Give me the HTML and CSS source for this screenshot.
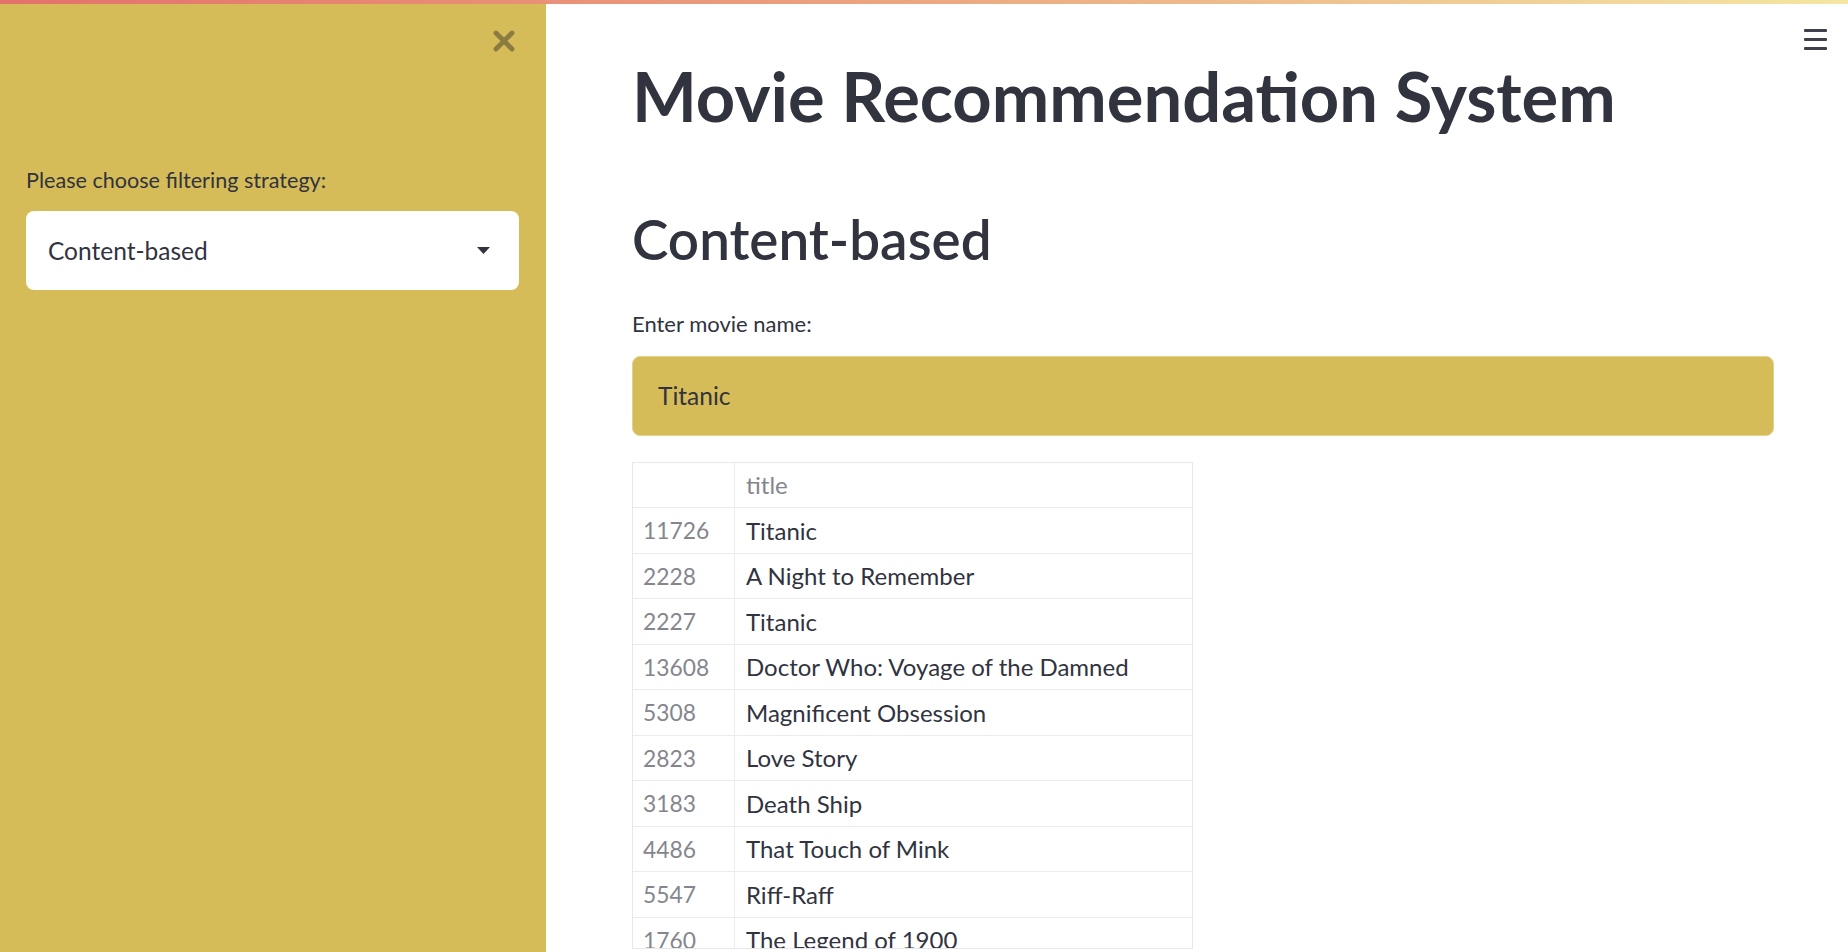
FILE: index.html
```html
<!DOCTYPE html>
<html lang="en">
<head>
<meta charset="utf-8">
<title>Movie Recommendation System</title>
<link rel="stylesheet" href="styles.css">
</head>
<body>
<div class="app">
  <div class="decoration"></div>
  <div class="layout">
    <aside class="sidebar">
      <div class="sidebar-top">
        <svg class="close-icon" viewBox="0 0 22 22" aria-label="Close sidebar">
          <path d="M3 3 L19 19 M19 3 L3 19" stroke="#8a7c41" stroke-width="4.8" stroke-linecap="round" fill="none"/>
        </svg>
      </div>
      <label class="widget-label side-label">Please choose filtering strategy:</label>
      <div class="select">
        <span>Content-based</span>
        <svg class="caret" viewBox="0 0 13 7"><polygon points="0,0 13,0 6.5,7" fill="#31333f"/></svg>
      </div>
    </aside>
    <main class="main">
      <div class="menu-btn" aria-label="Menu">
        <span class="bar"></span><span class="bar"></span><span class="bar"></span>
      </div>
      <div class="block">
        <h1 class="title">Movie Recommendation System</h1>
        <h2 class="subtitle">Content-based</h2>
        <label class="widget-label main-label">Enter movie name:</label>
        <div class="text-input">Titanic</div>
        <div class="dataframe">
          <div class="row head"><div class="cell idx"></div><div class="cell col">title</div></div>
          <div class="row"><div class="cell idx">11726</div><div class="cell val">Titanic</div></div>
          <div class="row"><div class="cell idx">2228</div><div class="cell val">A Night to Remember</div></div>
          <div class="row"><div class="cell idx">2227</div><div class="cell val">Titanic</div></div>
          <div class="row"><div class="cell idx">13608</div><div class="cell val">Doctor Who: Voyage of the Damned</div></div>
          <div class="row"><div class="cell idx">5308</div><div class="cell val">Magnificent Obsession</div></div>
          <div class="row"><div class="cell idx">2823</div><div class="cell val">Love Story</div></div>
          <div class="row"><div class="cell idx">3183</div><div class="cell val">Death Ship</div></div>
          <div class="row"><div class="cell idx">4486</div><div class="cell val">That Touch of Mink</div></div>
          <div class="row"><div class="cell idx">5547</div><div class="cell val">Riff-Raff</div></div>
          <div class="row"><div class="cell idx">1760</div><div class="cell val">The Legend of 1900</div></div>
        </div>
      </div>
    </main>
  </div>
</div>
</body>
</html>
```

FILE: styles.css
```css
* { box-sizing: border-box; }
html, body { margin: 0; padding: 0; }
body {
  font-family: Lato, "Noto Sans", sans-serif;
  color: #31333f;
  background: #ffffff;
  overflow: hidden;
}
.app {
  height: 952px;
  display: flex;
  flex-direction: column;
}
.decoration {
  flex: none;
  height: 4px;
  background: linear-gradient(90deg, #e4716a 0%, #eba17f 45%, #f4e6a2 100%);
}
.layout {
  flex: 1;
  display: flex;
  min-height: 0;
}
.sidebar {
  flex: none;
  width: 546px;
  background: #d6bc58;
  padding: 26px 27px 0 26px;
}
.sidebar-top {
  display: flex;
  justify-content: flex-end;
  padding-right: 4px;
  height: 22px;
}
.close-icon { width: 22px; height: 22px; display: block; }
.widget-label {
  display: block;
  font-size: 22px;
  line-height: 32px;
  margin-top: 111.5px;
  color: #31333f;
}
.side-label { font-size: 21.6px; }
.select {
  margin-top: 15.5px;
  height: 79px;
  background: #ffffff;
  border-radius: 8px;
  display: flex;
  align-items: center;
  justify-content: space-between;
  padding: 0 29px 0 22px;
  font-size: 24.5px;
}
.caret { width: 13px; height: 7px; display: block; }
.main {
  flex: 1;
  position: relative;
  padding: 52px 74px 0 86px;
  min-width: 0;
}
.menu-btn {
  position: absolute;
  top: 25px;
  right: 21px;
  width: 23px;
  display: flex;
  flex-direction: column;
  gap: 6px;
}
.bar {
  display: block;
  height: 3px;
  border-radius: 1px;
  background: #3e404b;
}
.block { width: 1142px; }
.title {
  margin: 0;
  font-size: 68.7px;
  font-weight: 700;
  line-height: 80px;
}
.subtitle {
  margin: 70px 0 0;
  font-size: 54.8px;
  font-weight: 600;
  line-height: 66px;
}
.main-label { margin-top: 36px; }
.text-input {
  margin-top: 15.5px;
  height: 80px;
  background: #d6bc58;
  border: 1px solid #e3d08a;
  border-radius: 8px;
  display: flex;
  align-items: center;
  padding-left: 25px;
  font-size: 24.5px;
}
.dataframe {
  margin-top: 26px;
  width: 561px;
  height: 487px;
  overflow: hidden;
  border: 1px solid #e8e8ea;
}
.row {
  display: grid;
  grid-template-columns: 102px 1fr;
  height: 45.5px;
  border-bottom: 1.5px solid #ececee;
}
.cell {
  display: flex;
  align-items: center;
  padding: 0 10px;
  font-size: 24px;
  white-space: nowrap;
}
.idx {
  border-right: 1.5px solid #ececee;
  color: #85868d;
  font-size: 22.8px;
}
.col { color: #85868d; padding-left: 11px; }
.val { color: #31333f; padding-left: 11px; }
```
